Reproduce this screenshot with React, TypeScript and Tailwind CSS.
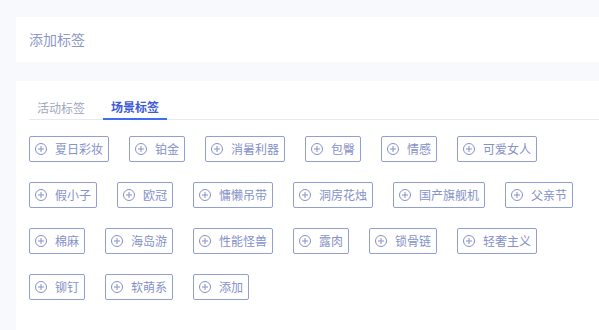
import { useState } from "react"

const tags = [
    "夏日彩妆", "铂金", "消暑利器", "包臀", "情感", "可爱女人",
    "假小子", "欧冠", "慵懒吊带", "洞房花烛", "国产旗舰机", "父亲节",
    "棉麻", "海岛游", "性能怪兽", "露肉", "锁骨链", "轻奢主义",
    "铆钉", "软萌系", "添加",
]

function PlusCircle() {
    return (
        <svg width="12" height="12" viewBox="0 0 12 12" fill="none" stroke="currentColor" strokeWidth="1">
            <circle cx="6" cy="6" r="5.5" />
            <path d="M6 3v6M3 6h6" />
        </svg>
    )
}

export default function App() {
    const [tab, setTab] = useState(1)

    return (
        <div
            className="w-[599px] h-[330px] bg-[#f7f9fd] pt-[17px] pl-4 overflow-hidden"
            style={{ fontFamily: '"Noto Sans CJK SC", "Noto Sans", sans-serif' }}
        >
            {/* Title card */}
            <div className="h-[45px] bg-white flex items-center pl-[13px]">
                <span className="text-[14px] text-[#8e98c8]">添加标签</span>
            </div>

            {/* Tag card */}
            <div className="mt-[19px] bg-white h-[260px] pl-[13px] pt-[15px]">
                <div className="flex gap-[10px] border-b border-[#e6e9f2] h-[24px]">
                    {["活动标签", "场景标签"].map((t, i) => (
                        <button
                            key={t}
                            onClick={() => setTab(i)}
                            className={
                                i === tab
                                    ? "px-2 text-[12px] leading-[20px] h-[24px] font-bold text-[#3e5ad6] border-b-2 border-[#3f6ff0] -mb-px"
                                    : "px-2 text-[12px] leading-[20px] h-[24px] text-[#a0a6bd]"
                            }
                        >
                            {t}
                        </button>
                    ))}
                </div>

                <div className="flex flex-wrap gap-x-5 gap-y-5 pt-4 w-[560px]">
                    {tags.map((t) => (
                        <div
                            key={t}
                            className="h-[26px] flex items-center gap-2 px-[5px] border border-[#939ed2] rounded-[2px] text-[#8591c8]"
                        >
                            <PlusCircle />
                            <span className="text-[12px] leading-none">{t}</span>
                        </div>
                    ))}
                </div>
            </div>
        </div>
    )
}
